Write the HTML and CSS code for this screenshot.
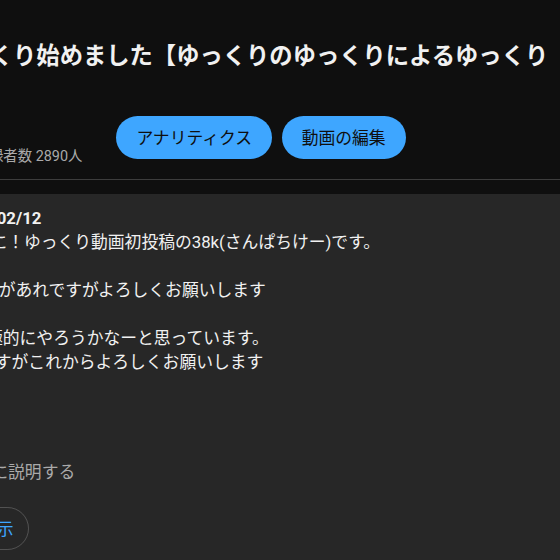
FILE: index.html
```html
<!DOCTYPE html>
<html lang="ja">
<head>
  <meta charset="UTF-8" />
  <meta name="viewport" content="width=device-width, initial-scale=1.0" />
  <title>ゆっくり始めました</title>
  <link rel="stylesheet" href="styles.css">
</head>
<body>
  <div class="watch">
    <h1 class="video-title">初投稿！ゆっくり始めました【ゆっくりのゆっくりによるゆっくり　実況】</h1>

    <div class="top-row">
      <div class="owner">
        <div class="avatar"></div>
        <div class="owner-text">
          <div class="channel-name">38k</div>
          <div class="sub-count">チャンネル登録者数 2890人</div>
        </div>
      </div>
      <div class="owner-buttons">
        <button class="pill-btn">アナリティクス</button>
        <button class="pill-btn">動画の編集</button>
      </div>
    </div>

    <div class="divider"></div>

    <div class="description">
      <div class="desc-info">580 回視聴 2023/02/12</div>
      <div class="desc-text">
        はいどうも! ついに！ゆっくり動画初投稿の38k(さんぱちけー)です。<br>
        <br>
        初めてなので出来があれですがよろしくお願いします<br>
        <br>
        今後は もっと積極的にやろうかなーと思っています。<br>
        ...まだまだ下手ですがこれからよろしくお願いします
      </div>

      <div class="transcript">
        <h3>文字起こし</h3>
        <p>1分で要点を簡単に説明する</p>
        <button class="outline-btn">文字起こしを表示</button>
      </div>
    </div>
  </div>
</body>
</html>
```

FILE: styles.css
```css
body {
  margin: 0;
  background: #0f0f0f;
  color: #f1f1f1;
  font-family: "Roboto", "Noto Sans CJK JP", sans-serif;
  overflow: hidden;
}

.watch {
  margin-left: -150px;
  width: 900px;
  padding-top: 40px;
}

.video-title {
  margin: 0;
  font-size: 23.3px;
  line-height: 33.6px;
  font-weight: 700;
  white-space: nowrap;
}

.top-row {
  display: flex;
  align-items: flex-start;
  margin-top: 42px;
}

.owner {
  display: flex;
  align-items: center;
  padding-top: 4px;
  margin-right: 34px;
}

.avatar {
  width: 48px;
  height: 48px;
  border-radius: 50%;
  background: #5a3d8a;
  margin-right: 5px;
}

.channel-name {
  font-size: 19.2px;
  line-height: 26.4px;
  font-weight: 500;
}

.sub-count {
  font-size: 14.4px;
  line-height: 21.6px;
  color: #aaa;
  white-space: nowrap;
}

.owner-buttons {
  display: flex;
  gap: 9.6px;
}

.pill-btn {
  height: 43.2px;
  padding: 0 20px;
  border: none;
  border-radius: 21.6px;
  background: #3ea6ff;
  color: #0f0f0f;
  font-family: inherit;
  font-size: 16.8px;
  font-weight: 400;
}

.divider {
  height: 1px;
  margin-top: 11px;
  background: #3d3d3d;
}

.description {
  margin-top: 14px;
  padding: 12px 14.4px;
  background: #272727;
  border-radius: 14px;
  font-size: 16.8px;
  line-height: 24px;
  height: 500px;
}

.desc-info {
  font-weight: 700;
  white-space: nowrap;
}

.desc-text {
  white-space: nowrap;
}

.transcript {
  margin-top: 60px;
}

.transcript h3 {
  margin: 0;
  font-size: 19.2px;
  line-height: 26.4px;
  font-weight: 700;
}

.transcript p {
  margin: 0;
  color: #aaa;
}

.outline-btn {
  margin-top: 22.6px;
  height: 43.2px;
  padding: 0 14px;
  border: 1px solid rgba(255, 255, 255, 0.2);
  border-radius: 21.6px;
  background: transparent;
  color: #3ea6ff;
  font-family: inherit;
  font-size: 16.8px;
  font-weight: 400;
}
```
